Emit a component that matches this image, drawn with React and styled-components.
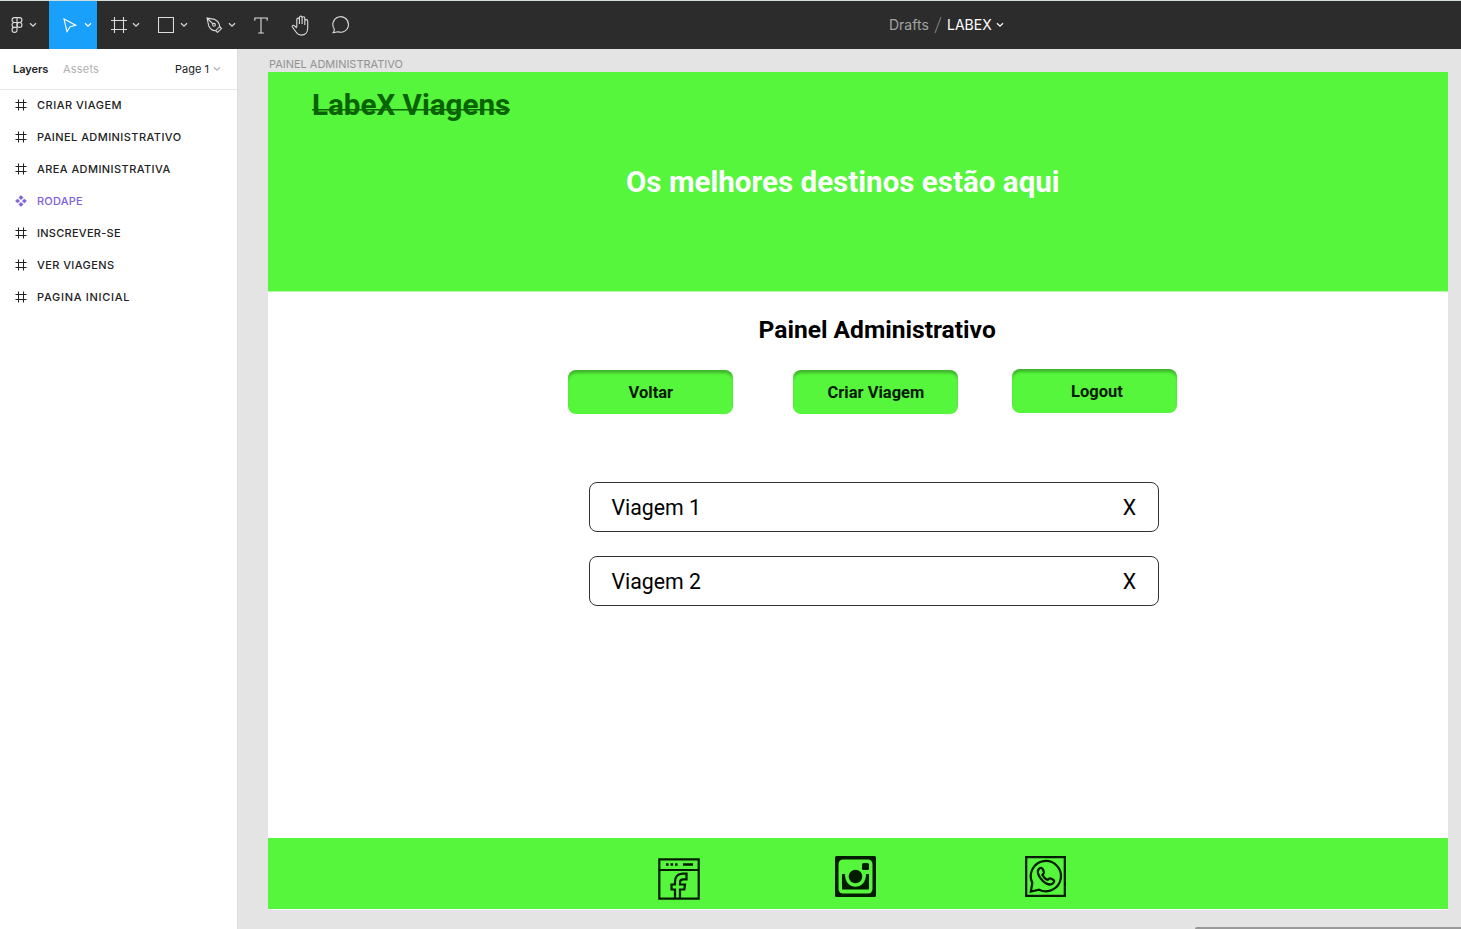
import React from "react";
import styled, { createGlobalStyle } from "styled-components";

const GREEN = "#55f63b";

const GlobalStyle = createGlobalStyle`
  * { box-sizing: border-box; }
  html, body { margin: 0; height: 100%; overflow: hidden; }
  h1, h2, p { margin: 0; }
  button { border: 0; padding: 0; background: none; font: inherit; color: inherit; }
  svg { display: block; flex: none; }
`;

const Window = styled.div`
  display: flex;
  flex-direction: column;
  width: 1461px;
  height: 929px;
  overflow: hidden;
  background: #e4e4e4;
  font-family: Inter, "Liberation Sans", sans-serif;
`;

const Toolbar = styled.header`
  display: grid;
  grid-template-columns: 889px auto 1fr;
  height: 49px;
  flex: none;
  border-top: 1px solid #d3dedb;
  background: #2c2c2c;
  color: #dcdcdc;
`;

const Tools = styled.div`
  display: flex;
`;

const Tool = styled.button`
  display: flex;
  align-items: center;
  justify-content: ${(p) => (p.$single ? "center" : "flex-start")};
  width: ${(p) => p.$width}px;
  height: 48px;
  padding-left: ${(p) => p.$pad || 0}px;
  gap: ${(p) => p.$gap || 0}px;
  background: ${(p) => (p.$active ? "#18a0fb" : "transparent")};
  color: ${(p) => (p.$active ? "#fff" : "#dcdcdc")};
`;

const FileTitle = styled.div`
  display: flex;
  align-items: center;
  height: 48px;
  font-size: 14px;
`;

const Crumb = styled.span`
  width: ${(p) => p.$width}px;
  padding-left: ${(p) => p.$pad || 0}px;
  color: ${(p) => p.$color};
  line-height: 18px;
  padding-bottom: 1px;
  white-space: nowrap;
`;

const Workspace = styled.div`
  display: flex;
  flex: 1;
  min-height: 0;
`;

const Sidebar = styled.aside`
  width: 238px;
  flex: none;
  background: #fff;
  border-right: 1px solid #dedede;
  font-size: 11px;
  color: #222;
`;

const Tabs = styled.div`
  display: flex;
  align-items: center;
  height: 41px;
  padding-left: 13px;
  border-bottom: 1px solid #e5e5e5;
`;

const Tab = styled.span`
  width: ${(p) => p.$width}px;
  letter-spacing: ${(p) => p.$spacing || 0}px;
  font-weight: ${(p) => (p.$active ? 600 : 400)};
  color: ${(p) => (p.$muted ? "#b0b0b0" : "#222")};
  white-space: nowrap;
`;

const LayerList = styled.div`
  margin-top: -1px;
`;

const Layer = styled.div`
  display: flex;
  align-items: center;
  height: 32px;
  padding: 0 0 1px 15px;
  gap: 10px;
  color: ${(p) => (p.$component ? "#7b61d8" : "#222")};
`;

const LayerName = styled.span`
  letter-spacing: ${(p) => p.$spacing}px;
  font-weight: 500;
  white-space: nowrap;
`;

const Canvas = styled.main`
  display: flex;
  flex-direction: column;
  flex: 1;
  padding: 8px 13px 0 30px;
`;

const FrameLabel = styled.div`
  height: 15px;
  padding-left: 1px;
  line-height: 14px;
  font-size: 11px;
  letter-spacing: -0.02px;
  color: #929292;
`;

const Frame = styled.section`
  display: flex;
  flex-direction: column;
  height: 838px;
  flex: none;
  background: #fff;
  border-bottom: 1px solid #fff;
  font-family: Roboto, sans-serif;
`;

const Hero = styled.div`
  height: 220px;
  flex: none;
  padding: 15px 0 0 44px;
  border-bottom: 1px solid #b6f9aa;
  background: ${GREEN};
`;

const Brand = styled.h1`
  height: 36px;
  font-size: 29.6px;
  line-height: 37px;
  font-weight: 700;
  color: #086300;
  white-space: nowrap;
`;

const Struck = styled.span`
  background: linear-gradient(#086300, #086300) 0 21px / 100% 1.5px no-repeat;
`;

const Slogan = styled.p`
  margin: 41px 0 0 314px;
  font-size: 29.55px;
  line-height: 37px;
  font-weight: 700;
  color: #fff;
  white-space: nowrap;
`;

const Panel = styled.div`
  flex: 1;
  padding-top: 22px;
`;

const PanelTitle = styled.h2`
  padding-left: 490.5px;
  height: 32px;
  font-size: 24.6px;
  line-height: 32px;
  font-weight: 700;
  color: #000;
`;

const Actions = styled.div`
  display: flex;
  align-items: flex-end;
  height: 45px;
  margin: 23px 0 0 300.4px;
`;

const Action = styled.button`
  width: 165px;
  height: 44px;
  margin-right: ${(p) => p.$after || 0}px;
  padding: 1px 0 0 ${(p) => p.$shift || 0}px;
  align-self: ${(p) => (p.$raised ? "flex-start" : "flex-end")};
  border-radius: 8px;
  background: ${GREEN};
  box-shadow: inset 0 4px 3px -1px rgba(0, 0, 0, 0.27);
  font-size: 16.5px;
  font-weight: 700;
  color: #061a03;
`;

const Trips = styled.div`
  display: flex;
  flex-direction: column;
  gap: 24px;
  width: 570px;
  margin: 68px 0 0 321px;
`;

const Trip = styled.div`
  display: flex;
  align-items: center;
  justify-content: space-between;
  height: 50px;
  padding: 0 22px 0 21.500px;
  border: 1px solid #333;
  border-radius: 8px;
  font-size: 21.300px;
  color: #000;
`;

const Footer = styled.footer`
  display: flex;
  height: 71px;
  flex: none;
  padding-left: 390px;
  background: ${GREEN};
`;

const Social = styled.a`
  margin: ${(p) => p.$top}px ${(p) => p.$after}px 0 0;
  color: #031c00;
`;

const Scrollbar = styled.div`
  height: 2px;
  margin: auto -13px 0 927px;
  flex: none;
  border-radius: 2px 0 0 0;
  background: #999;
`;

const Chevron = ({ color = "currentColor" }) => (
  <svg width="8" height="6" viewBox="0 0 8 6" fill="none" stroke={color} strokeWidth="1.2">
    <path d="M1 1.3 4 4.2 7 1.3" />
  </svg>
);

const Icon = ({ w = 24, h = w, children }) => (
  <svg width={w} height={h} viewBox={`0 0 ${w} ${h}`} fill="none" stroke="currentColor" strokeWidth="1.1">
    {children}
  </svg>
);

const FigmaIcon = () => (
  <Icon w={12} h={16}>
    <path d="M6 .6H3.5a2.4 2.4 0 0 0 0 4.9H6zM6 .6h2.5a2.4 2.4 0 0 1 0 4.9H6zM6 5.5H3.5a2.4 2.4 0 0 0 0 4.9H6zM6 10.4H3.5A2.5 2.5 0 1 0 6 12.9z" />
    <circle cx="8.5" cy="7.95" r="2.45" />
  </Icon>
);

const MoveIcon = () => (
  <Icon w={14} h={15}>
    <path d="m1 1 11.6 6.2-5.500 1.500L4 13.600z" />
  </Icon>
);

const FrameIcon = () => (
  <Icon w={16} h={16}>
    <path d="M3.5 0v16M12.500 0v16M0 3.500h16M0 12.500h16" />
  </Icon>
);

const RectIcon = () => (
  <Icon w={16} h={16}>
    <path d="M.5.5h15v15H.5z" />
  </Icon>
);

const PenIcon = () => (
  <Icon w={17} h={16}>
    <path d="m1 1 7.700 1.400c3 1.300 4.800 4 5 7.200l-4.200 4.200C6.300 13.600 4 11.800 2.700 8.700zM1 1l5.900 5.900" />
    <circle cx="8" cy="7.8" r="1.4" />
    <path d="m13.500 9.500 2 2.100-4 3.800-2-2" />
  </Icon>
);

const TextIcon = () => (
  <Icon w={14} h={17}>
    <path d="M.8 3.800V1h12.400v2.800M7 1v15M4.200 16h5.600" />
  </Icon>
);

const HandIcon = () => (
  <Icon w={20} h={21}>
    <path d="M5.8 12V4.600c0-2 2.600-2 2.600 0V9M8.400 9V2.700c0-2.100 2.700-2.100 2.700 0V9M11.100 9V3.300c0-2 2.700-2 2.700 0V10M13.800 10V6c0-1.900 2.900-1.900 2.900 0v7.300c0 4.300-2.700 6.800-6.300 6.800-2.400 0-4-.9-5.200-2.800L1.400 12c-.8-1.500 1-2.400 2.200-1.200L5.800 13" />
  </Icon>
);

const CommentIcon = () => (
  <Icon w={19} h={18}>
    <path d="M2.300 13A7.800 7.800 0 1 1 6 15.800c-1.500.5-3 .8-4.800.9 1-1.100 1.200-2.300 1.100-3.700z" />
  </Icon>
);

const LayerFrameIcon = () => (
  <svg width="12" height="12" viewBox="0 0 12 12" stroke="currentColor" fill="none">
    <path d="M3.500.5v11M8.500.5v11M.5 3.500h11M.5 8.500h11" />
  </svg>
);

const ComponentIcon = () => (
  <svg width="12" height="12" viewBox="0 0 12 12" fill="currentColor" stroke="currentColor" strokeWidth=".5" strokeLinejoin="round">
    <path d="m6 .5 2.100 2.100L6 4.700 3.900 2.600zM6 7.300l2.100 2.100L6 11.500 3.900 9.400zM2.600 3.900 4.700 6 2.600 8.100.5 6zM9.400 3.900 11.500 6 9.400 8.100 7.300 6z" />
  </svg>
);

const FacebookIcon = () => (
  <svg width="42" height="42" viewBox="0 0 42 42" fill="none" stroke="currentColor" strokeWidth="2.200">
    <path d="M1.300 1.300h39.400v39.400H1.300zM1 12h40" />
    <path d="M8 6.500h2.600M12.500 6.500h2.600M17 6.500h2.600M25 6.500h10" strokeWidth="2.400" />
    <path d="M17 40V31.500h-3.500v-5H17V24c0-5.300 3-8.300 7.500-8.300h4v5.700h-3.200c-2.200 0-3.300 1-3.300 3v2.100h5l-.7 5H22V40" />
  </svg>
);

const InstagramIcon = () => (
  <svg width="41" height="41" viewBox="0 0 41 41">
    <rect width="41" height="41" rx="1.500" fill="currentColor" />
    <rect x="3.500" y="3.500" width="34" height="34" rx="4.500" fill={GREEN} />
    <path d="M7 18h3c-.5 17 21.500 17 21 0h3v15.500H7z" fill="currentColor" />
    <circle cx="20.500" cy="20.500" r="6.800" fill="currentColor" />
    <rect x="27" y="7" width="7" height="7" rx="1.500" fill="currentColor" />
  </svg>
);

const WhatsappIcon = () => (
  <svg width="41" height="41" viewBox="0 0 42 42" fill="none" stroke="currentColor" strokeWidth="2.300">
    <path d="M1.200 1.200h39.600v39.600H1.200z" />
    <path d="M7.500 27.500A15.500 15.500 0 1 1 14.500 34.500L6 36.500z" />
    <path d="M14.200 13.200c1.500-1.800 3.400-1.300 4.100.4l1 2.600c.5 1.600-.8 2.300-1.400 3.200 1.200 2.500 2.800 4.100 5.100 5.100 1-.7 1.800-2.100 3.300-1.500l2.600 1.300c1.600.9 1.100 2.500-.3 3.700-2.600 2.200-6.600.9-10.400-2.500-4-3.700-6.500-9.100-4-12.300z" />
  </svg>
);

const layers = [
  ["CRIAR VIAGEM", 0.5],
  ["PAINEL ADMINISTRATIVO", 0.43],
  ["AREA ADMINISTRATIVA", 0.42],
  ["RODAPE", 0.2, true],
  ["INSCREVER-SE", 0.27],
  ["VER VIAGENS", 0.41],
  ["PAGINA INICIAL", 0.7],
];

export default function App() {
  return (
    <Window>
      <GlobalStyle />
      <Toolbar>
        <Tools>
          <Tool $width={49} $pad={11} $gap={6}><FigmaIcon /><Chevron /></Tool>
          <Tool $width={48} $pad={14} $gap={7} $active><MoveIcon /><Chevron /></Tool>
          <Tool $width={48} $pad={14} $gap={5}><FrameIcon /><Chevron /></Tool>
          <Tool $width={48} $pad={13} $gap={6}><RectIcon /><Chevron /></Tool>
          <Tool $width={48} $pad={13} $gap={5}><PenIcon /><Chevron /></Tool>
          <Tool $width={39} $single><TextIcon /></Tool>
          <Tool $width={41} $single><HandIcon /></Tool>
          <Tool $width={40} $single><CommentIcon /></Tool>
        </Tools>
        <FileTitle>
          <Crumb $width={45} $color="#a3a3a3">Drafts</Crumb>
          <Icon w={8} h={18}><path d="M1 17 7 1" stroke="#777" /></Icon>
          <Crumb $width={54} $pad={5} $color="#fff">LABEX</Crumb>
          <Chevron color="#fff" />
        </FileTitle>
      </Toolbar>
      <Workspace>
        <Sidebar>
          <Tabs>
            <Tab $width={50} $active $spacing={-0.05}>Layers</Tab>
            <Tab $width={112} $muted $spacing={0.2}>Assets</Tab>
            <Tab $width={38}>Page 1</Tab>
            <Chevron color="#b0b0b0" />
          </Tabs>
          <LayerList>
            {layers.map(([name, spacing, component]) => (
              <Layer key={name} $component={component}>
                {component ? <ComponentIcon /> : <LayerFrameIcon />}
                <LayerName $spacing={spacing}>{name}</LayerName>
              </Layer>
            ))}
          </LayerList>
        </Sidebar>
        <Canvas>
          <FrameLabel>PAINEL ADMINISTRATIVO</FrameLabel>
          <Frame>
            <Hero>
              <Brand><Struck>LabeX Viagens</Struck></Brand>
              <Slogan>Os melhores destinos estão aqui</Slogan>
            </Hero>
            <Panel>
              <PanelTitle>Painel Administrativo</PanelTitle>
              <Actions>
                <Action $after={60}>Voltar</Action>
                <Action $after={53.5}>Criar Viagem</Action>
                <Action $raised $shift={5}>Logout</Action>
              </Actions>
              <Trips>
                <Trip><span>Viagem 1</span><span>X</span></Trip>
                <Trip><span>Viagem 2</span><span>X</span></Trip>
              </Trips>
            </Panel>
            <Footer>
              <Social $top={20} $after={135}><FacebookIcon /></Social>
              <Social $top={18} $after={149}><InstagramIcon /></Social>
              <Social $top={18} $after={0}><WhatsappIcon /></Social>
            </Footer>
          </Frame>
          <Scrollbar />
        </Canvas>
      </Workspace>
    </Window>
  );
}
